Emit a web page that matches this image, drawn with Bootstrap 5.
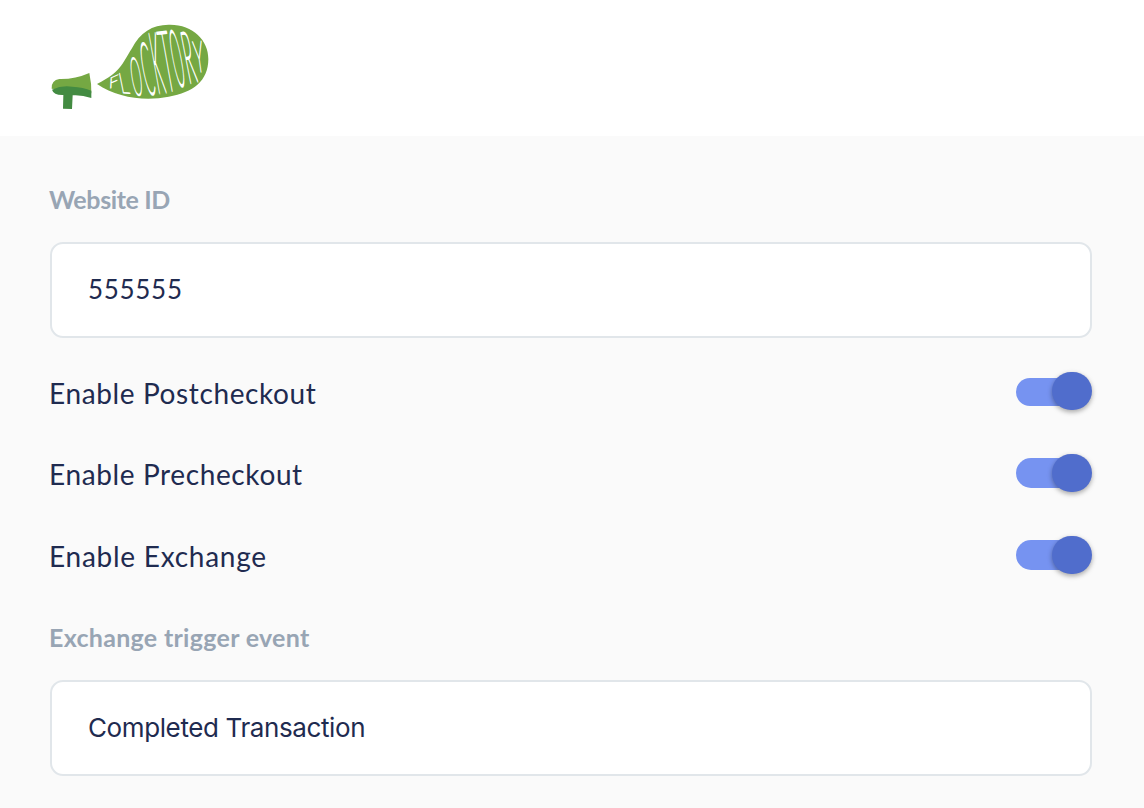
<!DOCTYPE html>
<html lang="en">
<head>
<meta charset="utf-8">
<meta name="viewport" content="width=device-width, initial-scale=1">
<title>Flocktory settings</title>
<link href="https://cdn.jsdelivr.net/npm/bootstrap@5.3.0/dist/css/bootstrap.min.css" rel="stylesheet">
<style>
body{background:#fafafa;color:#1f2b50;font-family:Lato,"Liberation Sans",sans-serif;height:808px;overflow:hidden}
.brand-bar{height:136px;padding:20px 50px;background:#fff}
.brand-bar svg{display:block;overflow:visible;font-family:Lato,sans-serif;font-weight:100;font-size:100px}
.settings{padding:43px 52px 0 49px}
.field-label{display:block;height:40px;line-height:40px;font-size:25px;font-weight:700;letter-spacing:-.38px;color:#98a5b4;white-space:nowrap;margin-bottom:23px}
.field-label.spaced{letter-spacing:.3px}
.field-box.form-control{height:96px;width:auto;min-width:calc(100% - 1px);margin-left:1px;border:2px solid #e1e6ea;border-radius:13px;padding:0 36px 2px;font-family:Inter,sans-serif;font-size:26px;letter-spacing:-.39px;color:#1f2b50;background:#fff}
.field-box.digits{font-family:Lato,sans-serif;letter-spacing:.7px}
.options{padding-top:12px;height:266px}
.option{height:82px;font-size:28px;letter-spacing:.62px}
.option label{line-height:38px;white-space:nowrap;padding-top:1px}
.option:first-child label{padding-top:4px}
.option:last-child label{letter-spacing:.74px}
.toggle{width:76px;height:38px}
.toggle .track{width:60px;height:30px;border-radius:15px;background:#7693f1}
.option:first-child .track{height:28px;margin-top:2px}
.toggle .knob{width:40px;height:38px;border-radius:19px;background:#506dcc;margin-left:-24px;box-shadow:0 2px 5px rgba(0,0,0,.34)}
</style>
</head>
<body>
<header class="brand-bar">
<svg width="162" height="90" viewBox="30 15 486 270" role="img" aria-label="Flocktory">
<path fill="#75a843" d="M35 221Q34 195 58 192Q105 193 148 174Q155 207 154 235Z"/>
<path fill="#438b42" d="M36 224Q65 210 97 215Q130 217 154 227L154 249Q124 239 98 241L96 282L69 281L70 240Q41 241 36 224Z"/>
<path fill="#75a843" d="M171 207C244 169 245 148 275 101C301 51 336 30 386 29C457 27 506 75 505 132C505 198 460 232 386 245C316 259 231 249 171 207Z"/>
<g fill="#fff" stroke="#fff" stroke-width="3.6" stroke-linejoin="round">
<text stroke-width="6" transform="matrix(.5 -.22 -.02 .45 206 222)">F</text>
<text transform="matrix(.54 .04 .17 .84 244 233)">L</text>
<text transform="matrix(.4 0 .24 1.57 281 239)">O</text>
<text transform="matrix(.44 0 .4 2.15 320 238)">C</text>
<text transform="matrix(.43 -.05 .45 2.52 353 235)">K</text>
<text stroke-width="3" transform="matrix(.56 -.06 .45 2.5 380 229)">T</text>
<text transform="matrix(.38 -.03 .45 2.33 412 214)">O</text>
<text transform="matrix(.48 -.1 .42 2.12 446 205)">R</text>
<text transform="matrix(.5 -.03 .18 1.3 469 172)">Y</text>
</g>
</svg>
</header>
<main class="settings">
<label class="field-label" for="site">Website ID</label>
<input id="site" class="form-control field-box digits" value="555555">
<div class="options">
<div class="option d-flex justify-content-between align-items-center"><label>Enable Postcheckout</label><div class="toggle d-flex align-items-center flex-shrink-0"><span class="track"></span><span class="knob"></span></div></div>
<div class="option d-flex justify-content-between align-items-center"><label>Enable Precheckout</label><div class="toggle d-flex align-items-center flex-shrink-0"><span class="track"></span><span class="knob"></span></div></div>
<div class="option d-flex justify-content-between align-items-center"><label>Enable Exchange</label><div class="toggle d-flex align-items-center flex-shrink-0"><span class="track"></span><span class="knob"></span></div></div>
</div>
<div style="height:13px"></div>
<label class="field-label spaced" for="event">Exchange trigger event</label>
<input id="event" class="form-control field-box" value="Completed Transaction">
</main>
<script src="https://cdn.jsdelivr.net/npm/bootstrap@5.3.0/dist/js/bootstrap.bundle.min.js"></script>
</body>
</html>
